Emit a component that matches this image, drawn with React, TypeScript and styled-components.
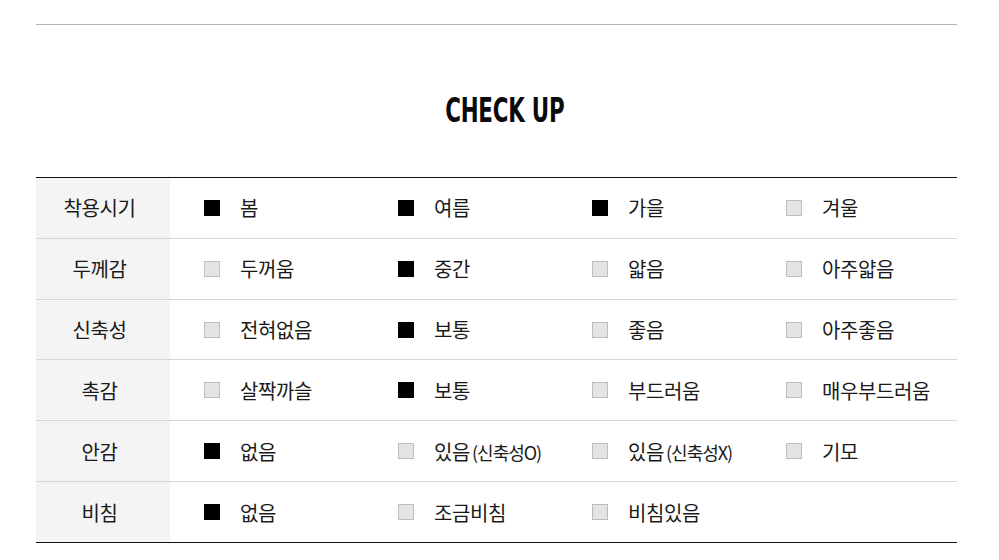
import { createGlobalStyle } from "styled-components";
import styled from "styled-components";

const ROWS: { label: string; options: { text: string; on: boolean }[] }[] = [
  {
    label: "착용시기",
    options: [
      { text: "봄", on: true },
      { text: "여름", on: true },
      { text: "가을", on: true },
      { text: "겨울", on: false },
    ],
  },
  {
    label: "두께감",
    options: [
      { text: "두꺼움", on: false },
      { text: "중간", on: true },
      { text: "얇음", on: false },
      { text: "아주얇음", on: false },
    ],
  },
  {
    label: "신축성",
    options: [
      { text: "전혀없음", on: false },
      { text: "보통", on: true },
      { text: "좋음", on: false },
      { text: "아주좋음", on: false },
    ],
  },
  {
    label: "촉감",
    options: [
      { text: "살짝까슬", on: false },
      { text: "보통", on: true },
      { text: "부드러움", on: false },
      { text: "매우부드러움", on: false },
    ],
  },
  {
    label: "안감",
    options: [
      { text: "없음", on: true },
      { text: "있음 (신축성O)", on: false },
      { text: "있음 (신축성X)", on: false },
      { text: "기모", on: false },
    ],
  },
  {
    label: "비침",
    options: [
      { text: "없음", on: true },
      { text: "조금비침", on: false },
      { text: "비침있음", on: false },
    ],
  },
];

const GlobalStyle = createGlobalStyle`
  body {
    margin: 0;
    background: #fff;
    color: #1a1a1a;
    font-family: "Noto Sans CJK KR", "Noto Sans", sans-serif;
  }
`;

const Page = styled.div`
  padding: 24px 42px 0 36px;
`;

const Rule = styled.hr`
  margin: 0;
  border: none;
  border-top: 1px solid #b4b4b4;
`;

const TitleRow = styled.div`
  display: flex;
  justify-content: center;
  align-items: center;
  height: 152px;
  padding: 18px 0 0 16px;
  box-sizing: border-box;
`;

const Title = styled.h2`
  margin: 0;
  font-family: "DejaVu Sans Condensed", "Liberation Sans", sans-serif;
  font-weight: 700;
  font-size: 33px;
  letter-spacing: -0.3px;
  color: #0a0a0a;
  transform: scaleX(0.72);
`;

const Table = styled.div`
  border-top: 1px solid #111;
  border-bottom: 1px solid #111;
`;

const Row = styled.div`
  display: flex;
  height: 59.83px;
  & + & {
    border-top: 1px solid #d6d6d6;
  }
`;

const Label = styled.div`
  width: 134px;
  flex: none;
  display: flex;
  align-items: center;
  justify-content: center;
  padding-right: 7px;
  box-sizing: border-box;
  background: #f4f4f4;
  font-size: 20px;
  letter-spacing: -0.4px;
`;

const Options = styled.div`
  flex: 1;
  display: grid;
  grid-template-columns: repeat(4, 194px);
  align-items: center;
  padding-left: 34px;
`;

const Option = styled.div`
  display: flex;
  align-items: center;
  gap: 20px;
  font-size: 20px;
  letter-spacing: -0.4px;
`;

const Box = styled.span<{ $on: boolean }>`
  width: 16px;
  height: 16px;
  box-sizing: border-box;
  flex: none;
  background: ${(p) => (p.$on ? "#000" : "#e4e4e4")};
  border: 1px solid ${(p) => (p.$on ? "#000" : "#bdbdbd")};
`;

const Paren = styled.span`
  font-size: 18px;
  margin-left: 2px;
  letter-spacing: -1px;
`;

function OptionText({ text }: { text: string }) {
  const i = text.indexOf(" (");
  if (i < 0) return <span>{text}</span>;
  return (
    <span>
      {text.slice(0, i)}
      <Paren>{text.slice(i + 1)}</Paren>
    </span>
  );
}

export default function App() {
  return (
    <>
      <GlobalStyle />
      <Page>
        <Rule />
        <TitleRow>
          <Title>CHECK UP</Title>
        </TitleRow>
        <Table>
          {ROWS.map((row) => (
            <Row key={row.label}>
              <Label>{row.label}</Label>
              <Options>
                {row.options.map((o) => (
                  <Option key={o.text}>
                    <Box $on={o.on} />
                    <OptionText text={o.text} />
                  </Option>
                ))}
              </Options>
            </Row>
          ))}
        </Table>
      </Page>
    </>
  );
}
